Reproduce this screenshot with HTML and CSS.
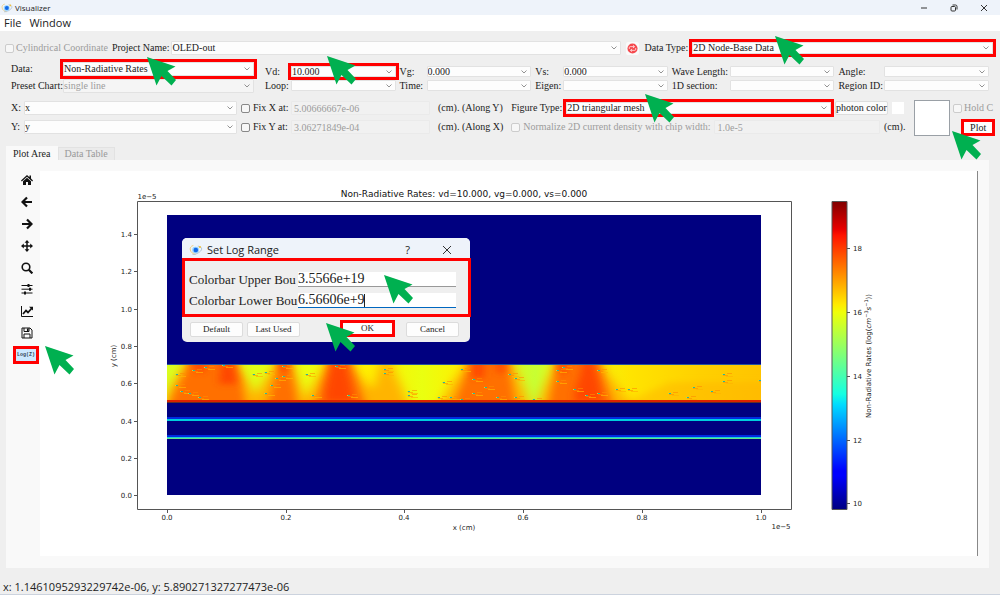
FILE: index.html
```html
<!DOCTYPE html>
<html lang="en">
<head>
<meta charset="utf-8">
<title>Visualizer</title>
<link rel="stylesheet" href="styles.css">
</head>
<body>
<svg class="defs" width="0" height="0" aria-hidden="true">
  <symbol id="arrow" viewBox="0 0 29 29"><path fill="#00b050" d="M0 0 28.500 9.500 20.500 14 29 23 24.500 28.500 14.500 19 9.500 28.500Z"/></symbol>
  <symbol id="logo" viewBox="0 0 16 12"><path d="M5 .8C2 1.500 1 3.500 1.500 6s3 4.500 6 5" fill="none" stroke="#efca72" stroke-width="1"/><path d="M4 11C8 11.500 14 8 14.500 5c.3-2-2-3-4.500-3.500" fill="none" stroke="#a9bfd0" stroke-width="1"/><circle cx="7.500" cy="6" r="3.800" fill="#8fd0ff"/><circle cx="7.800" cy="6" r="2.600" fill="#1268e8"/><circle cx="12.500" cy="2.500" r="1.200" fill="#efbf3c"/></symbol>
</svg>
<div class="app">
  <header class="titlebar">
    <svg class="logo"><use href="#logo"/></svg>
    <span class="title">Visualizer</span>
    <div class="window-buttons">
      <button aria-label="Minimize"><svg viewBox="0 0 8 8"><path d="M1 4h6"/></svg></button>
      <button aria-label="Restore"><svg viewBox="0 0 8 8"><rect x="1" y="2.500" width="4.500" height="4.500" rx="1"/><path d="M2.500 1h3q1.500 0 1.500 1.500v3"/></svg></button>
      <button aria-label="Close"><svg viewBox="0 0 8 8"><path d="m1 1 6 6M7 1 1 7"/></svg></button>
    </div>
  </header>
  <nav class="menubar"><button>File</button><button>Window</button></nav>

  <main>
    <form class="controls">
      <div class="project-row">
        <label class="check muted"><input type="checkbox" disabled>Cylindrical Coordinate</label>
        <label for="project">Project Name:</label>
        <select id="project" class="project"><option>OLED-out</option></select>
        <button type="button" class="refresh" aria-label="Refresh"><svg viewBox="0 0 12 12"><circle cx="6" cy="6" r="5.500" fill="#f5484d"/><path d="M2.500 6.500V5q0-1 1-1H8M6.500 2.500 8.200 4 6.500 5.500M9.500 5.500V7q0 1-1 1H4M5.500 6.500 3.800 8l1.700 1.500" fill="none" stroke="#fff" stroke-width=".8"/></svg></button>
        <label for="datatype">Data Type:</label>
        <select id="datatype" class="datatype marked"><option>2D Node-Base Data</option></select>
      </div>

      <div class="data-row">
        <div class="dataset">
          <label for="data">Data:</label><select id="data" class="marked"><option>Non-Radiative Rates</option></select>
          <label for="preset">Preset Chart:</label><select id="preset" disabled><option>single line</option></select>
        </div>
        <div class="sweeps">
          <label for="vd">Vd:</label><select id="vd" class="marked"><option>10.000</option></select>
          <label for="vg">Vg:</label><select id="vg"><option>0.000</option></select>
          <label for="vs">Vs:</label><select id="vs"><option>0.000</option></select>
          <label for="wave">Wave Length:</label><select id="wave"><option></option></select>
          <label for="angle">Angle:</label><select id="angle"><option></option></select>
          <label for="loop">Loop:</label><select id="loop"><option></option></select>
          <label for="time">Time:</label><select id="time"><option></option></select>
          <label for="eigen">Eigen:</label><select id="eigen"><option></option></select>
          <label for="section">1D section:</label><select id="section"><option></option></select>
          <label for="region">Region ID:</label><select id="region"><option></option></select>
        </div>
      </div>

      <div class="axis-row">
        <div class="axes">
          <label for="xaxis">X:</label><select id="xaxis"><option>x</option></select>
          <label class="check"><input type="checkbox">Fix X at:</label>
          <input type="text" aria-label="Fixed X" value="5.00666667e-06" disabled><span>(cm). (Along Y)</span>
          <label for="yaxis">Y:</label><select id="yaxis"><option>y</option></select>
          <label class="check"><input type="checkbox">Fix Y at:</label>
          <input type="text" aria-label="Fixed Y" value="3.06271849e-04" disabled><span>(cm). (Along X)</span>
        </div>
        <div class="figure-options">
          <div class="line">
            <label for="figtype">Figure Type:</label>
            <select id="figtype" class="marked"><option>2D triangular mesh</option></select>
            <button type="button" class="photon">photon color</button><span class="swatch"></span>
          </div>
          <div class="line">
            <label class="check muted"><input type="checkbox" disabled>Normalize 2D current density with chip width:</label>
            <input type="text" class="chip" aria-label="Chip width" value="1.0e-5" disabled><span class="unit">(cm).</span>
          </div>
        </div>
        <div class="preview"></div>
        <div class="plot-actions">
          <label class="check muted"><input type="checkbox" disabled>Hold C</label>
          <button type="button" class="plot-button marked">Plot</button>
        </div>
      </div>
    </form>

    <div class="tabs" role="tablist">
      <button role="tab" class="active" aria-selected="true">Plot Area</button><button role="tab" aria-selected="false">Data Table</button>
    </div>

    <section class="panel">
      <div class="tools">
        <button aria-label="Home"><svg viewBox="0 0 12 12"><path fill="#111" d="M6 1 0 6.500l.8.900L6 2.800l5.200 4.600.8-.9-2-1.900V1.500H8.500v1.800zM6 3.800 2 7.300V11h3V8h2v3h3V7.300z"/></svg></button>
        <button aria-label="Back"><svg viewBox="0 0 12 12"><path d="M11 6H2M6 1.500 1.500 6 6 10.500" stroke-width="2.200"/></svg></button>
        <button aria-label="Forward"><svg viewBox="0 0 12 12"><path d="M1 6h9M6 1.500 10.500 6 6 10.500" stroke-width="2.200"/></svg></button>
        <button aria-label="Pan"><svg viewBox="0 0 12 12"><path d="M6 1v10M1 6h10" stroke-width="1.500"/><path fill="#111" d="m6 0 2.400 2.800H3.600zM6 12 3.600 9.200h4.800zM0 6l2.800-2.400v4.800zM12 6 9.200 8.400V3.600z"/></svg></button>
        <button aria-label="Zoom"><svg viewBox="0 0 12 12"><circle cx="5" cy="5" r="3.800" stroke-width="1.600"/><path d="m7.800 7.800 3.600 3.600" stroke-width="2.200"/></svg></button>
        <button aria-label="Subplots"><svg viewBox="0 0 12 12"><path d="M.5 2.500h11M.5 6.200h11M.5 10h11"/><path d="M7.500 1v3M9 4.700v3M4 8.500v3" stroke-width="2"/></svg></button>
        <button aria-label="Customize"><svg viewBox="0 0 12 12"><path d="M.5 1v10.500H12"/><path d="m2 9 3-3.500 2 2L11 3" stroke-width="1.800"/><path fill="#111" d="M8 1.800h4v3.800z"/></svg></button>
        <button aria-label="Save"><svg viewBox="0 0 12 12"><path d="M1 1h8l2 2v8H1zM3 1v3.500h5V1M3 11V7h6v4"/><path d="M6.700 1.500v2.500" stroke-width="1.500"/></svg></button>
        <button class="log marked">Log(Z)</button>
      </div>

      <div class="canvas">
        <svg class="chart" viewBox="40 171 937 385" role="img" aria-label="Non-Radiative Rates mesh plot">
          <defs>
            <linearGradient id="jet" x1="0" y1="1" x2="0" y2="0">
              <stop offset="0" stop-color="#000080"/><stop offset=".11" stop-color="#00f"/><stop offset=".125" stop-color="#00f"/><stop offset=".34" stop-color="#00dbff"/><stop offset=".375" stop-color="#14ffe2"/><stop offset=".5" stop-color="#7dff7a"/><stop offset=".64" stop-color="#efff08"/><stop offset=".665" stop-color="#ffeb00"/><stop offset=".89" stop-color="#ff1300"/><stop offset=".91" stop-color="#e80000"/><stop offset="1" stop-color="#800000"/>
            </linearGradient>
            <linearGradient id="band" gradientUnits="userSpaceOnUse" x1="167" y1="0" x2="761" y2="0">
              <stop offset="0" stop-color="#d9ff20"/><stop offset=".14" stop-color="#e0ff18"/><stop offset=".24" stop-color="#ecff10"/><stop offset=".34" stop-color="#fff000"/><stop offset=".43" stop-color="#eaff10"/><stop offset=".5" stop-color="#fff000"/><stop offset=".62" stop-color="#c8ff32"/><stop offset=".68" stop-color="#efff10"/><stop offset=".78" stop-color="#ffe400"/><stop offset=".9" stop-color="#ffd000"/><stop offset="1" stop-color="#ffc400"/>
            </linearGradient>
            <filter id="wide" x="-30%" y="-50%" width="160%" height="200%"><feGaussianBlur stdDeviation="6 3"/></filter>
            <filter id="soft" x="-30%" y="-50%" width="160%" height="200%"><feGaussianBlur stdDeviation="4 3"/></filter>
            <clipPath id="layer"><path d="M167 365h594v37H167z"/></clipPath>
            <g id="spark"><path d="M-1 0h5v1h-5zM3-2h5v1H3z" fill="#ff8c00" opacity=".6"/><path d="M2 1h7v1H2z" fill="#ffb400" opacity=".7"/><path d="M-2-1h3v1h-3z" fill="#c4de40"/><path d="M-1-1h2v1h-2z" fill="#26b5a0"/></g>
          </defs>
          <path fill="#fff" d="M40 171h937v385H40z"/>
          <path fill="#000080" d="M167 215h594v280H167z"/>
          <g clip-path="url(#layer)">
            <path fill="url(#band)" d="M167 365h594v38H167z"/>
            <g fill="#ffb400" filter="url(#wide)">
              <path d="M188 356C182 375 165 385 162 412H258C256 385 244 380 235 356zM278 356C272 375 256 385 250 412H308C306 390 296 380 291 356zM328 356C322 375 308 385 302 412H384C378 390 358 380 350 356zM382 356C378 375 372 385 368 412H410C406 390 396 380 389 356zM468 356C462 375 446 385 438 412H530C528 390 518 380 510 356zM556 356C552 375 542 385 536 412H634C624 390 608 380 600 356z"/>
              <path d="M780 382H670l-60 28h170z" opacity=".5"/>
            </g>
            <g fill="#ff7000" filter="url(#soft)">
              <path d="M190 356C188 375 174 385 168 412H246C244 390 240 375 233 356zM280 356C278 375 270 388 266 412H298C296 390 292 375 288 356zM330 356C328 375 318 388 314 412H368C362 390 354 375 348 356zM471 356C468 375 458 388 452 412H516C514 390 510 375 507 356zM559 356C556 375 550 388 548 412H616C608 390 602 375 596 356z"/>
            </g>
            <g fill="#ff3400" opacity=".7" filter="url(#soft)">
              <path d="M192 358l3 14h10l-1-14zM222 358l-3 26h18l-4-26zM279 358l1 14h8v-14zM331 358c-1 20-6 24-6 44h28c0-20-6-24-7-44zM472 358v20h12v-20zM497 358v15h8v-15zM558 358v15h8v-15zM583 358c-1 20-8 24-9 44h28c-1-20-6-24-8-44z"/>
            </g>
            <g>
              <use href="#spark" x="177" y="375"/><use href="#spark" x="194" y="371"/><use href="#spark" x="206" y="368"/><use href="#spark" x="224" y="366"/><use href="#spark" x="177" y="386"/><use href="#spark" x="182" y="392"/><use href="#spark" x="190" y="394"/><use href="#spark" x="200" y="398"/><use href="#spark" x="254" y="375"/><use href="#spark" x="266" y="373"/><use href="#spark" x="284" y="367"/><use href="#spark" x="284" y="377"/><use href="#spark" x="277" y="379"/><use href="#spark" x="272" y="386"/><use href="#spark" x="266" y="394"/><use href="#spark" x="307" y="375"/><use href="#spark" x="313" y="396"/><use href="#spark" x="337" y="367"/><use href="#spark" x="349" y="396"/><use href="#spark" x="385" y="370"/><use href="#spark" x="385" y="374"/><use href="#spark" x="409" y="392"/><use href="#spark" x="409" y="396"/><use href="#spark" x="439" y="398"/><use href="#spark" x="444" y="383"/><use href="#spark" x="451" y="398"/><use href="#spark" x="462" y="370"/><use href="#spark" x="474" y="380"/><use href="#spark" x="474" y="394"/><use href="#spark" x="462" y="400"/><use href="#spark" x="486" y="388"/><use href="#spark" x="498" y="398"/><use href="#spark" x="510" y="375"/><use href="#spark" x="516" y="379"/><use href="#spark" x="516" y="398"/><use href="#spark" x="534" y="400"/><use href="#spark" x="558" y="371"/><use href="#spark" x="558" y="382"/><use href="#spark" x="564" y="368"/><use href="#spark" x="575" y="390"/><use href="#spark" x="587" y="396"/><use href="#spark" x="599" y="371"/><use href="#spark" x="599" y="394"/><use href="#spark" x="617" y="390"/><use href="#spark" x="629" y="390"/><use href="#spark" x="670" y="394"/><use href="#spark" x="688" y="398"/><use href="#spark" x="694" y="388"/><use href="#spark" x="712" y="392"/><use href="#spark" x="724" y="375"/><use href="#spark" x="724" y="382"/><use href="#spark" x="760" y="381"/>
            </g>
            <path d="M167 400h594v3H167z" fill="#dc2200"/>
          </g>
          <path d="M167 364.500h594" stroke="#27539a"/><path d="M167 402.500h594" stroke="#603028"/>
          <path d="M167 418h594M167 436h594" stroke="#002be0" stroke-width="2"/>
          <path d="M167 420h594" stroke="#00cddc" stroke-width="2"/><path d="M167 437.500h594" stroke="#18ced7"/><path d="M167 438.500h594" stroke="#62e68b"/>
          <g fill="none" stroke="#555" stroke-width="1">
            <path d="M137.500 201.500h654v308h-654z"/><path fill="url(#jet)" d="M832 201.500h15v308h-15z"/>
            <path d="M134 234.500h3M134 271.500h3M134 309.500h3M134 346.500h3M134 383.500h3M134 421.500h3M134 458.500h3M134 495.500h3M167.500 510v3M286.500 510v3M404.500 510v3M523.500 510v3M642.500 510v3M761.500 510v3M847 248.500h3M847 312.500h3M847 376.500h3M847 440.500h3M847 503.500h3"/>
          </g>
          <g class="tick end"><text x="132" y="237">1.4</text><text x="132" y="274">1.2</text><text x="132" y="312">1.0</text><text x="132" y="349">0.8</text><text x="132" y="386">0.6</text><text x="132" y="424">0.4</text><text x="132" y="461">0.2</text><text x="132" y="498">0.0</text></g>
          <g class="tick mid"><text x="167" y="520">0.0</text><text x="286" y="520">0.2</text><text x="404" y="520">0.4</text><text x="523" y="520">0.6</text><text x="642" y="520">0.8</text><text x="761" y="520">1.0</text><text x="464" y="530">x (cm)</text><text x="147" y="199">1e−5</text><text x="781" y="529">1e−5</text><text transform="translate(116 356) rotate(-90)">y (cm)</text></g>
          <g class="tick"><text x="853" y="251">18</text><text x="853" y="315">16</text><text x="853" y="379">14</text><text x="853" y="443">12</text><text x="853" y="506">10</text></g>
          <text class="tick mid" transform="translate(871 356) rotate(-90)">Non-Radiative Rates (log(<tspan font-style="italic">cm</tspan><tspan class="sup" dy="-3">−3</tspan><tspan font-style="italic" dy="3">s</tspan><tspan class="sup" dy="-3">−1</tspan><tspan dy="3">))</tspan></text>
          <text class="chart-title mid" x="464" y="197">Non-Radiative Rates: vd=10.000, vg=0.000, vs=0.000</text>
        </svg>

        <div class="dialog" role="dialog" aria-label="Set Log Range">
          <div class="dialog-title"><svg class="logo"><use href="#logo"/></svg><span>Set Log Range</span><button class="help" aria-label="Help">?</button><button class="close" aria-label="Close"><svg viewBox="0 0 10 10"><path d="m1 1 8 8M9 1 1 9"/></svg></button></div>
          <div class="bounds marked">
            <label for="upper">Colorbar Upper Bou</label><input type="text" id="upper" value="3.5566e+19">
            <label for="lower">Colorbar Lower Bou</label><div class="focused"><input type="text" id="lower" value="6.56606e+9"><i class="caret"></i></div>
          </div>
          <div class="dialog-buttons"><button>Default</button><button>Last Used</button><button class="ok marked">OK</button><button>Cancel</button></div>
          <svg class="pointer at-upper"><use href="#arrow"/></svg>
          <svg class="pointer at-ok"><use href="#arrow"/></svg>
        </div>
      </div>
    </section>
  </main>
  <footer class="status">x: 1.1461095293229742e-06, y: 5.890271327277473e-06</footer>

  <svg class="pointer at-data"><use href="#arrow"/></svg>
  <svg class="pointer at-vd"><use href="#arrow"/></svg>
  <svg class="pointer at-figure"><use href="#arrow"/></svg>
  <svg class="pointer at-type"><use href="#arrow"/></svg>
  <svg class="pointer at-plot"><use href="#arrow"/></svg>
  <svg class="pointer at-log"><use href="#arrow"/></svg>
</div>
</body>
</html>
```
FILE: styles.css
```css
* { box-sizing: border-box; }
body { margin: 0; background: #efefef; color: #222; font: 10px/14px "Liberation Serif", serif; }
button, input, select { font: inherit; color: inherit; margin: 0; padding: 0; border: 0; background: none; min-width: 0; }
.defs { position: absolute; }
.app { position: relative; display: flex; flex-direction: column; min-height: 100vh; overflow: hidden; }

.titlebar { display: flex; align-items: center; height: 15px; padding: 0 8px 0 1px; background: #eef3fa; font: 8px/14px "Open Sans", sans-serif; }
.logo { width: 12px; height: 10px; flex: none; }
.title { margin-left: 2px; }
.window-buttons { display: flex; gap: 14px; margin-left: auto; }
.window-buttons button { display: flex; justify-content: center; width: 16px; }
.window-buttons svg { width: 8px; height: 8px; fill: none; stroke: #333; }
.menubar { display: flex; gap: 8px; height: 16px; padding-left: 4px; background: #fff; font: 11px/16px "Open Sans", sans-serif; }

main { flex: 1; }
.controls label, .controls span { white-space: nowrap; }
.controls select, .controls input[type=text] { width: 100%; height: 14px; border: 1px solid #e2e2e2; border-radius: 1px; background-color: #fdfdfd; line-height: 12px; }
.controls input[type=text] { padding: 0 2px; }
.controls select { appearance: none; background-image: url("data:image/svg+xml,%3Csvg xmlns='http://www.w3.org/2000/svg' viewBox='0 0 6 4'%3E%3Cpath d='m.5.5 2.500 2.500L5.500.5' fill='none' stroke='%23777' stroke-width='.8'/%3E%3C/svg%3E"); background-repeat: no-repeat; background-position: right 3px center; background-size: 6px 4px; }
.controls :disabled, .muted { color: #9c9c9c; opacity: 1; }
.controls input[type=text]:disabled { background: #f1f1f1; border-color: #eaeaea; }
.controls select:disabled { background-color: #f5f5f5; }
.controls .marked, .app .marked { outline: 3px solid #f00; border-radius: 0; }
.check { display: flex; align-items: center; gap: 3px; }
.check input { appearance: none; flex: none; width: 9px; height: 9px; border: 1px solid #888; border-radius: 2px; background: #f7f7f7; }
.check input:disabled { border-color: #ccc; }

.project-row { display: flex; align-items: center; gap: 4px; height: 16px; margin: 9px 7px 0 5px; }
.project-row .check { gap: 2px; }
.project-row .project { flex: 3; margin-left: -2px; }
.controls .datatype { flex: 2; height: 12px; line-height: 10px; }
.refresh { width: 13px; height: 13px; margin: 0 1px; border-radius: 2px; background: #fafafa; }
.refresh svg { display: block; width: 11px; height: 11px; margin: 1px; }

.data-row { display: flex; gap: 11px; margin: 6px 11px 0; align-items: start; }
.dataset { display: grid; grid-template-columns: 50px 1fr; gap: 3px 2px; flex: 0 0 243px; }
.dataset label { line-height: 14px; }
.sweeps { flex: 1; display: grid; grid-template-columns: 22px 1fr 23px 1fr 24px 1fr 54px 1fr 42px 1fr; gap: 3px 4px; padding-top: 4px; }
.sweeps label { line-height: 11px; }
.controls .sweeps select { height: 11px; line-height: 9px; }

.axis-row { display: flex; margin: 8px 9px 0 11px; align-items: start; }
.axes { flex: 0 0 491px; display: grid; grid-template-columns: 13px 213px 50px 139px 1fr; row-gap: 5px; }
.axes .check, .axes input[type=text] { margin-left: 4px; }
.axes span { margin-left: 12px; }
.figure-options { flex: 1; display: grid; gap: 5px; margin-left: 8px; }
.line { display: flex; align-items: center; height: 14px; gap: 4px; }
.line select { flex: 1; }
.controls .line select { height: 12px; line-height: 10px; }
.photon { flex: none; width: 53px; height: 14px; border: 1px solid #ddd; border-radius: 2px; background: #fbfbfb; white-space: nowrap; line-height: 12px; }
.swatch { width: 12px; height: 12px; background: #fff; }
.line .chip { flex: 1; }
.line .unit { width: 20px; }
.preview { width: 36px; height: 36px; margin: -1px 3px 0 10px; border: 1px solid #9aa0a6; background: #fff; }
.plot-actions { width: 38px; display: grid; gap: 7px; }
.plot-actions .check { gap: 2px; }
.plot-button { width: 28px; height: 11px; margin: 0 1px 0 auto; background: #fdfdfd; line-height: 11px; }

.tabs { display: flex; align-items: end; height: 16px; margin: 8px 0 0 6px; }
.tabs button { height: 13px; padding: 0 6px; border: 1px solid #e2e2e2; border-bottom: 0; color: #999; background: #ebebeb; line-height: 12px; }
.tabs .active { height: 14px; border-color: #f9f9f9; background: #f9f9f9; color: #222; }
.panel { display: flex; align-items: start; margin: 0 11px 0 6px; padding: 11px 11px 12px 0; background: #f9f9f9; }
.tools { flex: 0 0 34px; display: flex; flex-direction: column; justify-content: space-between; height: 193px; padding-left: 7px; }
.tools button { display: flex; align-items: center; justify-content: center; width: 27px; height: 18px; }
.tools svg { width: 12px; height: 12px; fill: none; stroke: #111; stroke-width: 1; }
.tools [fill] { stroke: none; }
.tools .log { width: 20px; height: 12px; margin: 3px; background: #cce8ff; font: bold 5px/12px "Liberation Mono", monospace; color: #345; }
.canvas { position: relative; flex: 1; border-right: 1px solid #888; }
.chart { display: block; width: 100%; }
.tick { font: 7px "DejaVu Sans", sans-serif; fill: #222; }
.chart-title { font: 9px "DejaVu Sans", sans-serif; fill: #111; }
.sup { font-size: 5px; }
.mid { text-anchor: middle; }
.end { text-anchor: end; }

.dialog { position: absolute; left: 142px; top: 67px; width: 288px; border-radius: 5px; background: #efefef; }
.dialog-title { display: flex; align-items: center; height: 23px; padding: 0 16px 0 7px; border-radius: 5px 5px 0 0; background: #eef3fa; font: 11px/22px "Open Sans", sans-serif; }
.dialog-title .logo { width: 14px; height: 12px; margin-right: 4px; }
.dialog-title .help { margin: 0 32px 0 auto; }
.dialog-title .close { display: flex; width: 12px; }
.dialog-title .close svg { width: 10px; height: 10px; fill: none; stroke: #333; }
.bounds { display: grid; grid-template-columns: 109px 158px; gap: 6px 0; margin: 0 2px 0 3px; padding: 11px 0 6px 4px; font-size: 13px; line-height: 15px; }
.bounds label { white-space: nowrap; }
.bounds input { display: block; width: 100%; height: 15px; background: #fff; border-bottom: 1px solid #999; font-size: 14px; line-height: 14px; }
.focused { position: relative; }
.bounds .focused input { border-bottom-color: #0067c0; }
.caret { position: absolute; left: 66px; top: 1px; width: 1px; height: 13px; background: #222; }
.dialog-buttons { display: flex; gap: 4px; padding: 8px 11px 5px 8px; }
.dialog-buttons button { width: 53px; height: 15px; border: 1px solid #dcdcdc; border-radius: 2px; background: #fdfdfd; font-size: 9px; line-height: 13px; }
.dialog-buttons .ok { width: 49px; height: 11px; margin: 1px 10px 0 auto; border: 0; line-height: 11px; }

.status { height: 16px; padding-left: 3px; border-bottom: 1px solid #ccd3de; font: 11px/15px "Open Sans", sans-serif; }

.pointer { position: absolute; width: 29px; height: 29px; pointer-events: none; }
.at-data { left: 147px; top: 57px; }
.at-vd { left: 327px; top: 56px; }
.at-figure { left: 645px; top: 94px; }
.at-type { left: 775px; top: 36px; }
.at-plot { left: 952px; top: 131px; }
.at-log { left: 45px; top: 346px; }
.at-upper { left: 202px; top: 37px; }
.at-ok { left: 144px; top: 85px; }
```
